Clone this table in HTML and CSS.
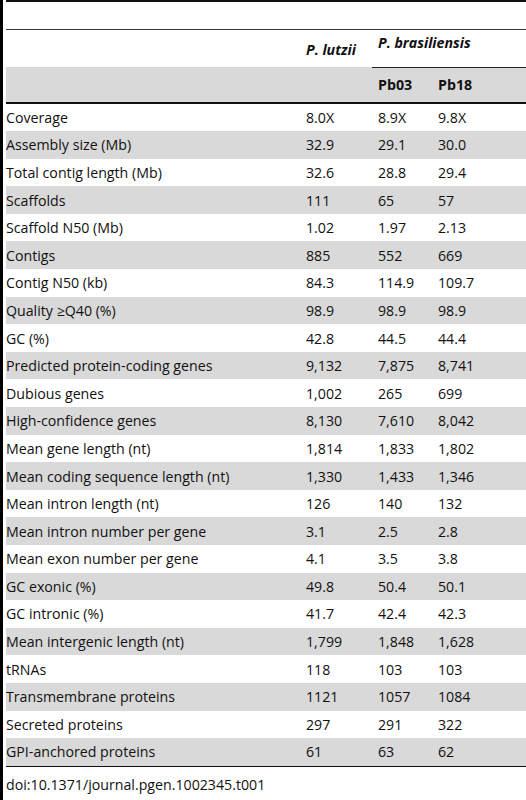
FILE: index.html
```html
<!DOCTYPE html>
<html>
<head>
<meta charset="utf-8">
<link rel="stylesheet" href="styles.css">
</head>
<body>
<div class="page">
  <div class="topgap"></div>
  <table class="data">
    <colgroup>
      <col class="c-label">
      <col class="c-lutzii">
      <col class="c-pb03">
      <col class="c-pb18">
    </colgroup>
    <thead>
      <tr class="h1">
        <th class="lab"></th>
        <th class="sp lutzii">P. lutzii</th>
        <th class="sp bras" colspan="2">P. brasiliensis</th>
      </tr>
      <tr class="h2">
        <th></th>
        <th></th>
        <th class="strain">Pb03</th>
        <th class="strain">Pb18</th>
      </tr>
    </thead>
    <tbody>
      <tr><td>Coverage</td><td>8.0X</td><td>8.9X</td><td>9.8X</td></tr>
      <tr><td>Assembly size (Mb)</td><td>32.9</td><td>29.1</td><td>30.0</td></tr>
      <tr><td>Total contig length (Mb)</td><td>32.6</td><td>28.8</td><td>29.4</td></tr>
      <tr><td>Scaffolds</td><td>111</td><td>65</td><td>57</td></tr>
      <tr><td>Scaffold N50 (Mb)</td><td>1.02</td><td>1.97</td><td>2.13</td></tr>
      <tr><td>Contigs</td><td>885</td><td>552</td><td>669</td></tr>
      <tr><td>Contig N50 (kb)</td><td>84.3</td><td>114.9</td><td>109.7</td></tr>
      <tr><td>Quality ≥Q40 (%)</td><td>98.9</td><td>98.9</td><td>98.9</td></tr>
      <tr><td>GC (%)</td><td>42.8</td><td>44.5</td><td>44.4</td></tr>
      <tr><td>Predicted protein-coding genes</td><td>9,132</td><td>7,875</td><td>8,741</td></tr>
      <tr><td>Dubious genes</td><td>1,002</td><td>265</td><td>699</td></tr>
      <tr><td>High-confidence genes</td><td>8,130</td><td>7,610</td><td>8,042</td></tr>
      <tr><td>Mean gene length (nt)</td><td>1,814</td><td>1,833</td><td>1,802</td></tr>
      <tr><td>Mean coding sequence length (nt)</td><td>1,330</td><td>1,433</td><td>1,346</td></tr>
      <tr><td>Mean intron length (nt)</td><td>126</td><td>140</td><td>132</td></tr>
      <tr><td>Mean intron number per gene</td><td>3.1</td><td>2.5</td><td>2.8</td></tr>
      <tr><td>Mean exon number per gene</td><td>4.1</td><td>3.5</td><td>3.8</td></tr>
      <tr><td>GC exonic (%)</td><td>49.8</td><td>50.4</td><td>50.1</td></tr>
      <tr><td>GC intronic (%)</td><td>41.7</td><td>42.4</td><td>42.3</td></tr>
      <tr><td>Mean intergenic length (nt)</td><td>1,799</td><td>1,848</td><td>1,628</td></tr>
      <tr><td>tRNAs</td><td>118</td><td>103</td><td>103</td></tr>
      <tr><td>Transmembrane proteins</td><td>1121</td><td>1057</td><td>1084</td></tr>
      <tr><td>Secreted proteins</td><td>297</td><td>291</td><td>322</td></tr>
      <tr><td>GPI-anchored proteins</td><td>61</td><td>63</td><td>62</td></tr>
    </tbody>
  </table>
  <p class="doi">doi:10.1371/journal.pgen.1002345.t001</p>
</div>
</body>
</html>
```

FILE: styles.css
```css
html, body {
  margin: 0;
  padding: 0;
  background: #fff;
}
body {
  font-family: "Open Sans", "DejaVu Sans", sans-serif;
  font-size: 14.2px;
  color: #111;
}
.page {
  border-left: 3px solid #000;
  padding-left: 3px;
  min-height: 800px;
  box-sizing: border-box;
}
.topgap {
  height: 27px;
  border-top: 2px solid #111;
  border-bottom: 1px solid #333;
}
.data {
  width: 100%;
  border-collapse: collapse;
  table-layout: fixed;
}
.c-label { width: 294px; }
.c-lutzii { width: 72px; }
.c-pb03 { width: 60px; }
.data th, .data td {
  padding: 0 0 0 6px;
  text-align: left;
  white-space: nowrap;
  line-height: 19px;
}
.data th:first-child, .data td:first-child {
  padding-left: 0;
}
.h1 th {
  height: 37px;
  padding-top: 0;
  padding-bottom: 0;
  font-style: italic;
  font-weight: bold;
}
.h1 .lutzii {
  height: 29px;
  vertical-align: bottom;
  padding-bottom: 8px;
}
.h1 .bras {
  height: 33px;
  vertical-align: top;
  padding-top: 3px;
  border-bottom: 1px solid #222;
}
.h2 th {
  height: 34px;
  background: #d9d9d9;
  font-weight: bold;
  border-bottom: 2px solid #111;
}
.data tbody td {
  height: 27.6px;
  vertical-align: middle;
}
.data tbody tr:nth-child(even) td {
  background: #d9d9d9;
}
.data tbody tr:last-child td {
  border-bottom: 1px solid #111;
}
.doi {
  margin: 8px 0 0;
  line-height: 20px;
}
```
